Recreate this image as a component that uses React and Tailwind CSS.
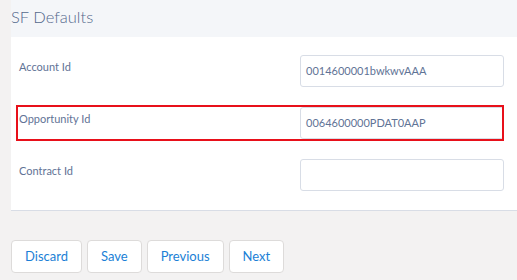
export default function App() {
  const rows = [
    { label: "Account Id", value: "0014600001bwkwvAAA" },
    { label: "Opportunity Id", value: "0064600000PDAT0AAP", hl: true },
    { label: "Contract Id", value: "" },
  ];
  return (
    <div className="w-[517px] h-[280px] bg-[#f3f2f2] pl-[11px] overflow-hidden" style={{ fontFamily: "Lato, 'Open Sans', sans-serif" }}>
      <div className="bg-white border-b border-[#d8dde6]">
        <div className="h-[37px] bg-[#f4f6f9] flex items-center">
          <span className="text-[16.5px] font-light text-[#54698d] leading-none -mt-[2px]">SF Defaults</span>
        </div>
        <div className="pt-[16px] pb-[17px] pl-[5px] pr-[13px] flex flex-col gap-[16px]">
          {rows.map((r) => (
            <div
              key={r.label}
              className={
                "h-[36px] flex items-start " +
                (r.hl ? "outline-2 -outline-offset-2 outline-[#e8101a]" : "")
              }
            >
              <div className="w-[284px] pl-[3px] pt-[6px] text-[11px] leading-[16px] text-[#5f7396]">{r.label}</div>
              <div className="mt-[2px] w-[204px] h-[32px] border border-[#d8dde6] rounded-[3px] bg-white flex items-center pl-[5px] text-[11px] text-[#5f7396]">
                {r.value}
              </div>
            </div>
          ))}
        </div>
      </div>
      <div className="mt-[29px] flex gap-[5px]">
        {["Discard", "Save", "Previous", "Next"].map((b) => (
          <button
            key={b}
            className="h-[33px] px-[13px] bg-white border border-[#dddbda] rounded-[4px] text-[13px] text-[#1b7fd6]"
          >
            {b}
          </button>
        ))}
      </div>
    </div>
  );
}
